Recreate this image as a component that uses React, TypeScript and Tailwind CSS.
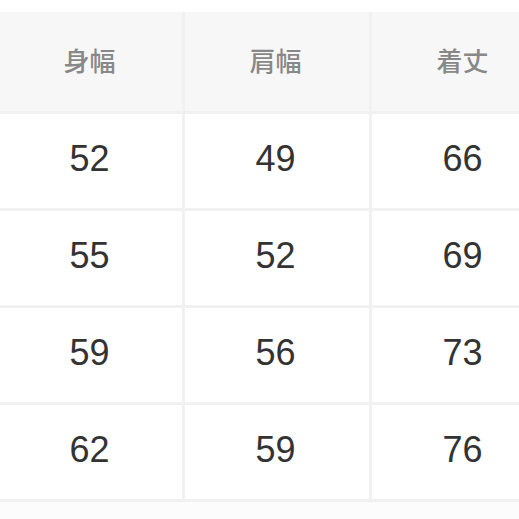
const headers = ["身幅", "肩幅", "着丈"];
const rows = [
  ["52", "49", "66"],
  ["55", "52", "69"],
  ["59", "56", "73"],
  ["62", "59", "76"],
];

export default function App() {
  return (
    <div className="h-[519px] w-[519px] overflow-hidden bg-white pt-[12px]">
      <div className="grid w-[560px] grid-cols-[182px_184px_184px] gap-[3px] bg-[#f1f1f1] pb-[3px]">
        {headers.map((h) => (
          <div
            key={h}
            className="flex h-[99px] items-center justify-center bg-[#f7f7f7] pr-[3px] pb-[4px] text-[26px] font-medium text-[#888888] [font-family:'Noto_Sans_CJK_JP',sans-serif]"
          >
            {h}
          </div>
        ))}
        {rows.map((r, i) =>
          r.map((v, j) => (
            <div
              key={`${i}-${j}`}
              className="flex h-[94px] items-center justify-center bg-white pr-[3px] pb-[4px] text-[36px] text-[#333333] [font-family:'Liberation_Sans',Arial,sans-serif]"
            >
              {v}
            </div>
          ))
        )}
      </div>
      <div className="h-[20px] bg-[#fcfcfc]" />
      <div className="h-[2px] bg-[#c8c8c8]" />
    </div>
  );
}
